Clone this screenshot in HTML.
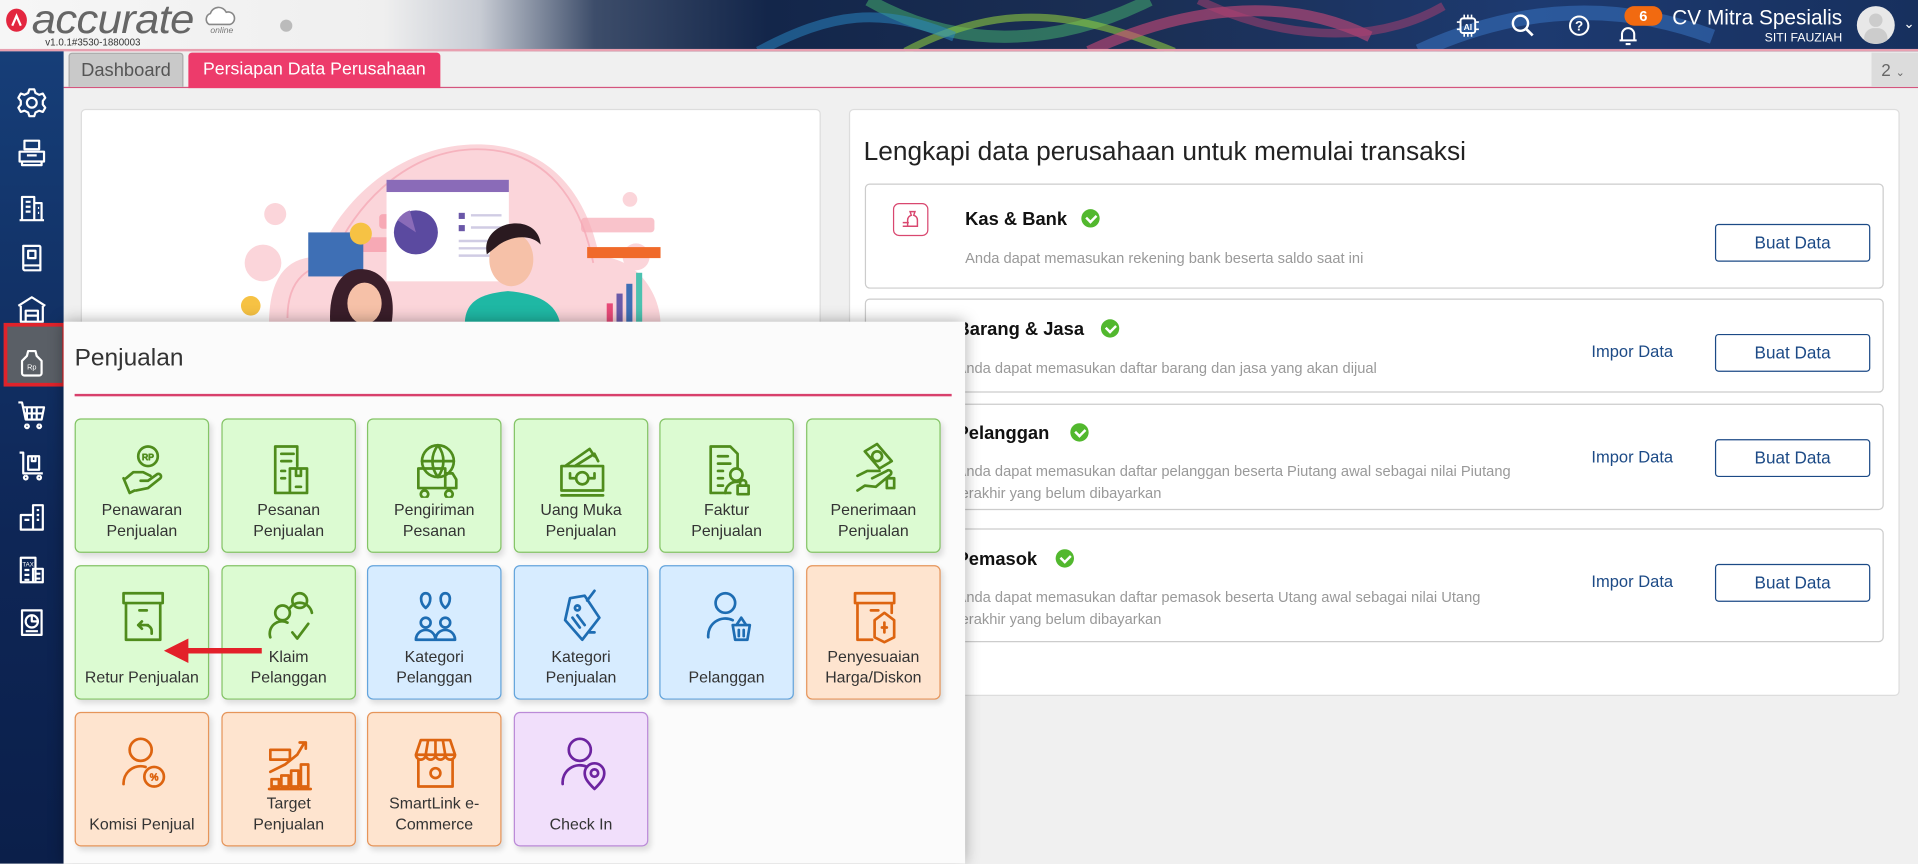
<!DOCTYPE html>
<html><head><meta charset="utf-8">
<style>
*{box-sizing:border-box;margin:0;padding:0}
html,body{width:1918px;height:863px;overflow:hidden;background:#f0f0f0;font-family:"Liberation Sans",sans-serif}
#w{position:absolute;left:0;top:0;width:1568px;height:706px;transform:scale(1.22322);transform-origin:0 0;background:#f0f0f0}
.a{position:absolute}
.hdr{left:0;top:0;width:1568px;height:42px;background:linear-gradient(90deg,#f6f6f6 0%,#efefef 20%,#c8ccd4 25%,#3d4d6a 31%,#13264a 40%,#1b2f55 60%,#1d3a70 80%,#17305e 100%)}
.side{left:0;top:42px;width:52px;height:664px;background:linear-gradient(180deg,#163e78,#0e2656 60%,#0b1f4a)}
.card{background:#fff;border:1px solid #ddd;border-radius:4px}
.row{left:707px;width:833px;border:1px solid #ccc;border-radius:4px;background:#fff}
.ttl{font-size:15px;font-weight:bold;color:#111}
.desc{font-size:12px;color:#999;line-height:18px}
.btn{width:127px;height:31px;border:1px solid #1c4a86;border-radius:3px;color:#1c4a86;font-size:14px;text-align:center;line-height:29px;background:#fff}
.imp{font-size:13.5px;color:#1c4a86}
.chk{width:15px;height:15px;border-radius:50%;background:#52b82e}
.chk:after{content:"";position:absolute;left:4px;top:3.5px;width:6px;height:3.5px;border-left:2px solid #fff;border-bottom:2px solid #fff;transform:rotate(-45deg)}
.tile{position:absolute;width:110px;height:110px;border-radius:5px;border:1px solid;box-shadow:2px 3px 5px rgba(0,0,0,.12);text-align:center}
.tile span{position:absolute;left:0;right:0;bottom:9px;font-size:13px;line-height:17px;color:#333}
.tile svg{position:absolute;left:35px;top:18px;width:40px;height:46px;fill:none;stroke-width:2.2;stroke-linecap:round;stroke-linejoin:round}
.g{background:#dcfbd2;border-color:#84c466}.g svg{stroke:#4f8c1c}
.b{background:#d7ecff;border-color:#63a4dc}.b svg{stroke:#1e6db3}
.o{background:#fee4cf;border-color:#e6955a}.o svg{stroke:#dd6410}
.p{background:#f1dffb;border-color:#bb8ad8}.p svg{stroke:#6d24a0}
.si{position:absolute;left:13px;width:26px;height:26px;fill:none;stroke:#fff;stroke-width:1.8;stroke-linejoin:round}
</style></head><body><div id="w">

<!-- header -->
<div class="a hdr"></div>
<svg class="a" style="left:560px;top:0" width="1008" height="42" viewBox="0 0 1008 42">
<path d="M150 0 C220 40 300 40 380 0" stroke="#3fa06a" stroke-width="10" fill="none" opacity=".6"/>
<path d="M180 42 C260 0 320 10 400 42" stroke="#8cc63f" stroke-width="6" fill="none" opacity=".6"/>
<path d="M330 42 C420 0 500 0 560 30" stroke="#d94a7a" stroke-width="9" fill="none" opacity=".55"/>
<path d="M420 0 C480 30 560 40 620 5" stroke="#b04070" stroke-width="7" fill="none" opacity=".5"/>
<path d="M600 42 C680 5 760 0 840 30" stroke="#3a78c8" stroke-width="12" fill="none" opacity=".5"/>
<path d="M60 42 C120 10 160 5 220 30" stroke="#2a8ac8" stroke-width="8" fill="none" opacity=".5"/>
</svg>
<div class="a" style="left:0;top:40px;width:1568px;height:2px;background:#e8a0b0"></div>
<div class="a" style="left:5px;top:7px;width:17px;height:19px;border-radius:50%;background:#e3263f"></div>
<svg class="a" style="left:8px;top:10px" width="11" height="13"><path d="M2 11 L5.5 3 L9 11" stroke="#fff" stroke-width="1.8" fill="none"/></svg>
<div class="a" style="left:26px;top:-3px;font-size:33px;font-style:italic;color:#666;letter-spacing:-0.5px;transform:scaleX(1.08);transform-origin:0 0">accurate</div>
<svg class="a" style="left:166px;top:4px" width="28" height="18"><path d="M5 16 a5 5 0 0 1 1-9 a7 7 0 0 1 13-1 a5 5 0 0 1 3 10 z" fill="#fff" stroke="#888" stroke-width="1.3"/></svg>
<div class="a" style="left:172px;top:22px;font-size:7px;color:#777;font-style:italic">online</div>
<div class="a" style="left:37px;top:30px;font-size:8px;color:#333">v1.0.1#3530-1880003</div>
<div class="a" style="left:229px;top:16px;width:10px;height:10px;border-radius:50%;background:#bbb"></div>

<svg class="a" style="left:1190px;top:11px" width="20" height="20" viewBox="0 0 20 20"><rect x="4" y="4" width="12" height="12" rx="2" stroke="#fff" stroke-width="1.6" fill="none"/><path d="M7 1v3M10 1v3M13 1v3M7 16v3M10 16v3M13 16v3M1 7h3M1 13h3M16 7h3M16 13h3" stroke="#fff" stroke-width="1.3"/><text x="10" y="13.5" font-size="7" font-weight="bold" fill="#fff" text-anchor="middle" font-family="Liberation Sans">AI</text></svg>
<svg class="a" style="left:1235px;top:11px" width="20" height="20"><circle cx="8" cy="8" r="6.2" stroke="#fff" stroke-width="2" fill="none"/><path d="M12.5 12.5 L18 18" stroke="#fff" stroke-width="2.2"/></svg>
<svg class="a" style="left:1282px;top:12px" width="18" height="18"><circle cx="9" cy="9" r="7.5" stroke="#fff" stroke-width="1.7" fill="none"/><text x="9" y="13" font-size="11" font-weight="bold" fill="#fff" text-anchor="middle" font-family="Liberation Sans">?</text></svg>
<svg class="a" style="left:1322px;top:19px" width="18" height="20"><path d="M4 14 V9 a5 5 0 0 1 10 0 V14 H2 H16 M7 17 h4" stroke="#fff" stroke-width="1.7" fill="none"/></svg>
<div class="a" style="left:1328px;top:5px;width:31px;height:16px;border-radius:8px;background:#f26a10;color:#fff;font-size:12px;font-weight:bold;text-align:center;line-height:16px">6</div>
<div class="a" style="left:1360px;top:5px;width:146px;text-align:right;color:#fff;font-size:17px">CV Mitra Spesialis</div>
<div class="a" style="left:1380px;top:26px;width:126px;text-align:right;color:#fff;font-size:10px">SITI FAUZIAH</div>
<div class="a" style="left:1518px;top:5px;width:31px;height:31px;border-radius:50%;background:#e8e8e8;overflow:hidden"><div class="a" style="left:10px;top:6px;width:11px;height:11px;border-radius:50%;background:#ccc"></div><div class="a" style="left:6px;top:18px;width:19px;height:16px;border-radius:8px 8px 0 0;background:#ccc"></div></div>
<div class="a" style="left:1556px;top:13px;color:#fff;font-size:11px">&#8964;</div>

<!-- tabs -->
<div class="a" style="left:52px;top:71px;width:1516px;height:1px;background:#d4557e"></div>
<div class="a" style="left:56px;top:43px;width:94px;height:28px;background:#c9c9c9;border:1px solid #aaa;border-bottom:none;border-radius:3px 3px 0 0;color:#555;font-size:15px;text-align:center;line-height:27px">Dashboard</div>
<div class="a" style="left:154px;top:43px;width:206px;height:29px;background:#ed3b6b;border-radius:3px 3px 0 0;color:#fff;font-size:14.5px;text-align:center;line-height:29px">Persiapan Data Perusahaan</div>
<div class="a" style="left:1530px;top:43px;width:38px;height:28px;background:#dcdcdc;color:#666;font-size:14px;line-height:28px;padding-left:8px">2 <span style="font-size:9px">&#8964;</span></div>

<!-- sidebar -->
<div class="a side"></div>
<div class="a" style="left:3px;top:264px;width:51px;height:52px;border:3px solid #e0232b;background:#5a5f66"></div>
<svg class="si" style="top:71px" viewBox="0 0 26 26"><circle cx="13" cy="13" r="4"/><path d="M11 2h4l1 3 3 1.5 3-1 2 3.5-2 2.5v3l2 2.5-2 3.5-3-1-3 1.5-1 3h-4l-1-3-3-1.5-3 1-2-3.5 2-2.5v-3l-2-2.5 2-3.5 3 1 3-1.5z"/></svg>
<svg class="si" style="top:112px" viewBox="0 0 26 26"><path d="M7 3h12v7H7zM3 12h20v8H3zM5 20v3h16v-3M9 15h8"/></svg>
<svg class="si" style="top:157px" viewBox="0 0 26 26"><path d="M3 23h20M5 23V4h10v19M15 9h6v14M8 8h4M8 12h4M8 16h4M18 13h1M18 17h1"/></svg>
<svg class="si" style="top:198px" viewBox="0 0 26 26"><path d="M6 3h13a1 1 0 0 1 1 1v19H7a2 2 0 0 1-1-2zM6 19h14M10 7h6v6h-6z"/></svg>
<svg class="si" style="top:240px" viewBox="0 0 26 26"><path d="M2 10 13 3l11 7M4 10v13h18V10M8 14h10v9H8zM8 18h10"/></svg>
<svg class="si" style="top:283px" viewBox="0 0 26 26"><path d="M10 4h6l1 4 4 4v10a2 2 0 0 1-2 2H7a2 2 0 0 1-2-2V12l4-4z"/><text x="13" y="19" font-size="6" fill="#fff" stroke="none" text-anchor="middle" font-family="Liberation Sans">Rp</text></svg>
<svg class="si" style="top:326px" viewBox="0 0 26 26"><path d="M2 3h3l3 14h13l2-10H6M9 7v10M13 7v10M17 7v10M7 12h15M9 21a1.5 1.5 0 1 0 .1 0M19 21a1.5 1.5 0 1 0 .1 0"/></svg>
<svg class="si" style="top:367px" viewBox="0 0 26 26"><path d="M3 3h3v17h16M10 6h9v11h-9zM13 6v4h3V6M8 22a1.5 1.5 0 1 0 .1 0M19 22a1.5 1.5 0 1 0 .1 0"/></svg>
<svg class="si" style="top:410px" viewBox="0 0 26 26"><path d="M14 3h8v20h-8zM4 11h10v12H4zM17 7h2M17 11h2M17 15h2M7 15h4"/></svg>
<svg class="si" style="top:453px" viewBox="0 0 26 26"><path d="M4 3h12v20H4zM14 12h8v11h-8zM7 13h4M7 17h4M7 21h4M16 16h4M16 20h4"/><text x="10" y="10" font-size="5" fill="#fff" stroke="none" text-anchor="middle" font-family="Liberation Sans">TAX</text></svg>
<svg class="si" style="top:496px" viewBox="0 0 26 26"><path d="M5 3h16v20H5zM8 20h10"/><circle cx="13" cy="12" r="5"/><path d="M13 7v5h5"/></svg>

<!-- left card -->
<div class="a card" style="left:66px;top:89px;width:605px;height:500px"></div>
<svg class="a" style="left:180px;top:100px" width="380" height="165" viewBox="0 0 380 165">
<path d="M40 165 C40 120 60 110 80 110 C100 60 150 18 210 18 C270 18 300 60 310 110 C340 110 360 140 360 165 Z" fill="#fbd5da"/>
<path d="M55 160 C55 125 75 118 90 115 C110 65 155 22 210 22 C268 22 295 65 305 115" stroke="#f6b3be" stroke-width="1.5" fill="none"/>
<circle cx="45" cy="75" r="9" fill="#fbd5da"/><circle cx="35" cy="115" r="15" fill="#fbd5da"/><circle cx="340" cy="110" r="11" fill="#fbd5da"/><circle cx="335" cy="63" r="6" fill="#fbd5da"/>
<rect x="130" y="75" width="60" height="12" rx="3" fill="#f7a9b5"/><rect x="295" y="78" width="60" height="12" rx="3" fill="#f7a9b5" opacity=".7"/><rect x="112" y="94" width="50" height="12" rx="3" fill="#f7a9b5"/>
<rect x="136" y="47" width="100" height="83" fill="#fff"/><rect x="136" y="47" width="100" height="10" fill="#8a6bb8"/>
<circle cx="160" cy="90" r="18" fill="#5b4aa0"/><path d="M160 90 L145 80 A18 18 0 0 1 155 72 Z" fill="#8a6bb8"/>
<rect x="195" y="74" width="5" height="5" fill="#6a57a8"/><rect x="195" y="84" width="5" height="5" fill="#6a57a8"/><path d="M205 76h25M205 86h25M195 97h35M195 103h35M195 109h35" stroke="#d0cce4" stroke-width="2"/>
<rect x="72" y="90" width="45" height="36" fill="#3e6fb5"/><circle cx="115" cy="91" r="9" fill="#f6c244"/>
<circle cx="25" cy="150" r="8" fill="#f6c244"/>
<path d="M90 165 C88 135 100 120 115 120 C132 120 145 135 140 165Z" fill="#3a1e2a"/><ellipse cx="118" cy="148" rx="14" ry="17" fill="#f6c1a8"/>
<path d="M200 165 C200 145 215 140 235 138 C260 140 275 148 278 165Z" fill="#1fb8a4"/><ellipse cx="238" cy="112" rx="18" ry="22" fill="#f6c1a8"/><path d="M218 108 C212 80 260 72 262 100 C255 92 240 92 228 100Z" fill="#2a1a20"/>
<rect x="300" y="102" width="60" height="9" fill="#f06a2a"/><rect x="316" y="148" width="5" height="17" fill="#e74a78"/><rect x="324" y="140" width="5" height="25" fill="#6a5aa8"/><rect x="332" y="132" width="5" height="33" fill="#3e6fb5"/><rect x="340" y="123" width="5" height="42" fill="#4cc2b0"/>
</svg>

<!-- right card -->
<div class="a card" style="left:694px;top:89px;width:859px;height:480px"></div>
<div class="a" style="left:706px;top:112px;font-size:21.5px;color:#222">Lengkapi data perusahaan untuk memulai transaksi</div>

<div class="a row" style="top:150px;height:86px"></div>
<div class="a" style="left:730px;top:166px;width:29px;height:27px;border:1.3px solid #d9476f;border-radius:5px"></div>
<svg class="a" style="left:736px;top:171px" width="17" height="17"><path d="M8 2h4l-1 3a4 4 0 0 1 3 4v5H6V9a4 4 0 0 1 3-4zM2 11h5M2 14h5" stroke="#d9476f" stroke-width="1.2" fill="none"/></svg>
<div class="a ttl" style="left:789px;top:171px">Kas &amp; Bank</div><div class="a chk" style="left:884px;top:171px"></div>
<div class="a desc" style="left:789px;top:202px">Anda dapat memasukan rekening bank beserta saldo saat ini</div>
<div class="a btn" style="left:1402px;top:183px">Buat Data</div>

<div class="a row" style="top:244px;height:77px"></div>
<div class="a ttl" style="left:782px;top:261px">Barang &amp; Jasa</div><div class="a chk" style="left:900px;top:261px"></div>
<div class="a desc" style="left:782px;top:292px">Anda dapat memasukan daftar barang dan jasa yang akan dijual</div>
<div class="a imp" style="left:1301px;top:280px">Impor Data</div><div class="a btn" style="left:1402px;top:273px">Buat Data</div>

<div class="a row" style="top:330px;height:87px"></div>
<div class="a ttl" style="left:782px;top:346px">Pelanggan</div><div class="a chk" style="left:875px;top:346px"></div>
<div class="a desc" style="left:782px;top:376px">Anda dapat memasukan daftar pelanggan beserta Piutang awal sebagai nilai Piutang<br>terakhir yang belum dibayarkan</div>
<div class="a imp" style="left:1301px;top:366px">Impor Data</div><div class="a btn" style="left:1402px;top:359px">Buat Data</div>

<div class="a row" style="top:432px;height:93px"></div>
<div class="a ttl" style="left:782px;top:449px">Pemasok</div><div class="a chk" style="left:863px;top:449px"></div>
<div class="a desc" style="left:782px;top:479px">Anda dapat memasukan daftar pemasok beserta Utang awal sebagai nilai Utang<br>terakhir yang belum dibayarkan</div>
<div class="a imp" style="left:1301px;top:468px">Impor Data</div><div class="a btn" style="left:1402px;top:461px">Buat Data</div>

<!-- popup -->
<div class="a" style="left:52px;top:263px;width:737px;height:443px;background:#fbfbfb;box-shadow:0 0 12px rgba(0,0,0,.35)"></div>
<div class="a" style="left:61px;top:282px;font-size:20px;color:#333">Penjualan</div>
<div class="a" style="left:61px;top:322px;width:717px;height:2px;background:#d8406c"></div>

<div class="tile g" style="left:61px;top:342px"><svg viewBox="0 0 40 46"><circle cx="24" cy="12" r="8"/><text x="24" y="15" font-size="7" text-anchor="middle" stroke-width=".8" font-family="Liberation Sans">RP</text><path d="M6 30l6-5h8l6 3M14 40l10-2 10-8a2 2 0 0 0-3-3l-7 5h-6M4 30l5 12 4-2"/></svg><span>Penawaran<br>Penjualan</span></div>
<div class="tile g" style="left:181px;top:342px"><svg viewBox="0 0 40 46"><path d="M8 42V4h18v16M8 42h12M13 10h10M13 16h8M13 24h3M13 30h3M20 22h14v20H20zM25 22v6h4v-6M25 37h4"/></svg><span>Pesanan<br>Penjualan</span></div>
<div class="tile g" style="left:300px;top:342px"><svg viewBox="0 0 40 46"><circle cx="22" cy="16" r="13"/><path d="M9 16h26M22 3c-6 8-6 18 0 26M22 3c6 8 6 18 0 26M6 22h22v16H6zM28 26h6l3 5v7h-9M11 40a3 3 0 1 0 .1 0M31 40a3 3 0 1 0 .1 0"/></svg><span>Pengiriman<br>Pesanan</span></div>
<div class="tile g" style="left:420px;top:342px"><svg viewBox="0 0 40 46"><path d="M3 20h34v20H3zM3 44h34M6 20 26 6l4 6M14 20l16-10 3 6M14 30h-4v-4M26 30h4v-4"/><circle cx="20" cy="30" r="5"/></svg><span>Uang Muka<br>Penjualan</span></div>
<div class="tile g" style="left:539px;top:342px"><svg viewBox="0 0 40 46"><path d="M22 42H6V4h16l6 6v12M12 12h8M12 18h10M12 24h4M12 30h4M12 36h4"/><circle cx="27" cy="27" r="5"/><path d="M18 42a9 9 0 0 1 10-9M28 36h9v7h-9zM30 36v-2a2.5 2.5 0 0 1 5 0v2"/></svg><span>Faktur<br>Penjualan</span></div>
<div class="tile g" style="left:659px;top:342px"><svg viewBox="0 0 40 46"><path d="M12 8l10-6 12 14-10 6zM22 8a4 4 0 1 0 .1 0M6 28l8-4h10M18 30l12-6a2 2 0 0 1 3 3l-12 10-9-1-6 4M30 30h6v8h-6z"/></svg><span>Penerimaan<br>Penjualan</span></div>

<div class="tile g" style="left:61px;top:462px"><svg viewBox="0 0 40 46"><path d="M4 4h32v8H4zM6 12v30h28V12M17 18h6M24 30h-8l3-3M16 30l3 3M16 30h6a5 5 0 0 1 5 5v2"/></svg><span>Retur Penjualan</span></div>
<div class="tile g" style="left:181px;top:462px"><svg viewBox="0 0 40 46"><circle cx="28" cy="10" r="6"/><circle cx="14" cy="20" r="6"/><path d="M20 16a10 10 0 0 1 18 4M4 40a10 10 0 0 1 14-12M22 36l4 5 9-12"/></svg><span>Klaim<br>Pelanggan</span></div>
<div class="tile b" style="left:300px;top:462px"><svg viewBox="0 0 40 46"><path d="M12 16c-5-4-5-12 0-12s5 8 0 12zM28 16c-5-4-5-12 0-12s5 8 0 12z"/><circle cx="12" cy="28" r="4"/><circle cx="28" cy="28" r="4"/><path d="M4 42a8 8 0 0 1 16 0zM20 42a8 8 0 0 1 16 0z"/></svg><span>Kategori<br>Pelanggan</span></div>
<div class="tile b" style="left:420px;top:462px"><svg viewBox="0 0 40 46"><path d="M10 8l12-2 12 18-14 18-14-16zM16 14a2 2 0 1 0 .1 0M12 24l6 8M16 22l6 8M26 36h4M30 2l-6 8"/></svg><span>Kategori<br>Penjualan</span></div>
<div class="tile b" style="left:539px;top:462px"><svg viewBox="0 0 40 46"><circle cx="18" cy="12" r="8"/><path d="M4 40a14 14 0 0 1 20-14M24 30h14l-2 12H26zM27 30l4-6 4 6M29 34v5M33 34v5"/></svg><span>Pelanggan</span></div>
<div class="tile o" style="left:659px;top:462px"><svg viewBox="0 0 40 46"><path d="M4 4h32v8H4zM6 12v30h12M34 12v8M17 18h6M28 20l8 6v14l-8 4-8-4V26z"/><path d="M28 28v8M26 32h4"/></svg><span>Penyesuaian<br>Harga/Diskon</span></div>

<div class="tile o" style="left:61px;top:582px"><svg viewBox="0 0 40 46"><circle cx="18" cy="12" r="9"/><path d="M4 40a14 14 0 0 1 18-14"/><circle cx="29" cy="34" r="8"/><text x="29" y="37" font-size="8" text-anchor="middle" stroke-width=".7" font-family="Liberation Sans">%</text></svg><span>Komisi Penjual</span></div>
<div class="tile o" style="left:181px;top:582px"><svg viewBox="0 0 40 46"><path d="M4 12h16v8H4zM4 30l12-6 10-8 6-10M28 6h5v5M5 42h6v-6H5zM13 42h6v-9h-6zM21 42h6v-13h-6zM29 42h6v-18h-6zM3 44h34"/></svg><span>Target<br>Penjualan</span></div>
<div class="tile o" style="left:300px;top:582px"><svg viewBox="0 0 40 46"><path d="M8 4h24l4 12H4zM4 16a4 4 0 0 0 8 0 4 4 0 0 0 8 0 4 4 0 0 0 8 0 4 4 0 0 0 8 0M6 20v22h28V20M14 4l-2 12M26 4l2 12M20 4v12"/><circle cx="20" cy="31" r="4"/></svg><span>SmartLink e-<br>Commerce</span></div>
<div class="tile p" style="left:420px;top:582px"><svg viewBox="0 0 40 46"><circle cx="18" cy="12" r="9"/><path d="M4 40a14 14 0 0 1 20-14M30 44c-6-6-8-9-8-13a8 8 0 0 1 16 0c0 4-2 7-8 13z"/><circle cx="30" cy="31" r="3"/></svg><span>Check In</span></div>

<!-- red arrow -->
<svg class="a" style="left:130px;top:520px" width="90" height="26"><path d="M84 12H22" stroke="#e3202a" stroke-width="4.5"/><path d="M4 12 L24 2 L24 22 Z" fill="#e3202a"/></svg>

</div></body></html>
